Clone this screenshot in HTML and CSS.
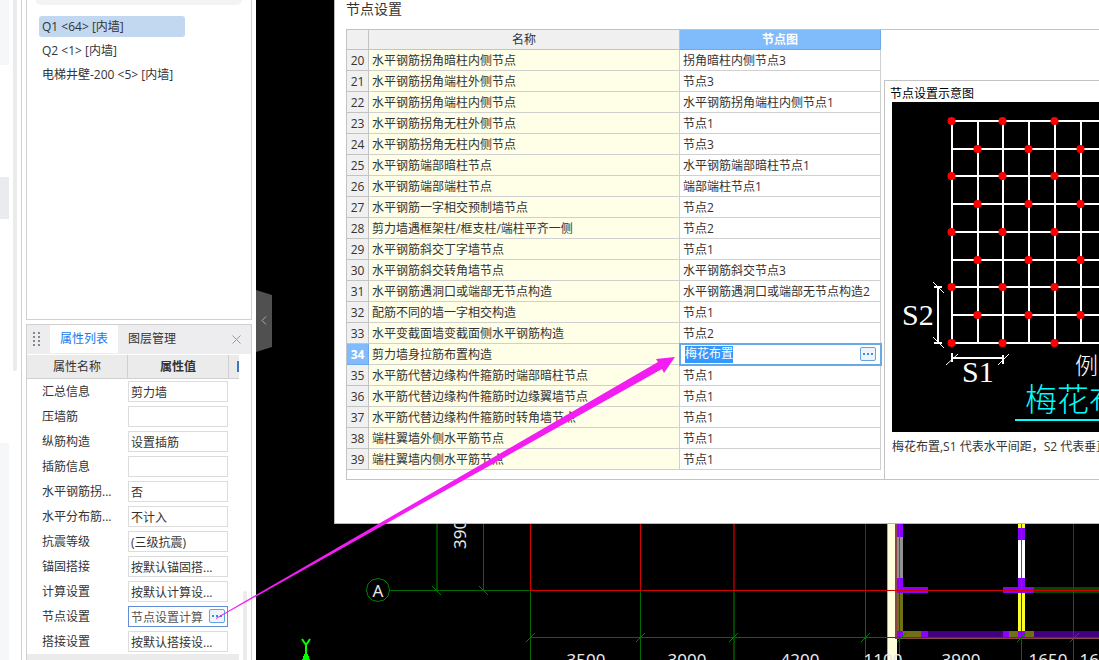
FILE: index.html
```html
<!DOCTYPE html>
<html lang="zh-CN">
<head>
<meta charset="utf-8">
<title>节点设置</title>
<link rel="stylesheet" href="styles.css">
</head>
<body>
<div class="app">
  <div class="rail">
    <div class="rail-blocks"><i class="block block-a"></i><i class="block block-b"></i><i class="block block-c"></i></div>
    <div class="rail-scroll"></div>
  </div>

  <aside class="side">
    <section class="panel components">
      <div class="search"></div>
      <ul class="component-list">
        <li><button class="component selected">Q1 &lt;64&gt; [内墙]</button></li>
        <li><button class="component">Q2 &lt;1&gt; [内墙]</button></li>
        <li><button class="component">电梯井壁-200 &lt;5&gt; [内墙]</button></li>
      </ul>
    </section>

    <section class="panel props">
      <div class="tabs">
        <svg class="grip" width="8" height="16" viewBox="0 0 8 16"><path d="M0 0h2v2H0zM5 0h2v2H5zM0 4h2v2H0zM5 4h2v2H5zM0 8h2v2H0zM5 8h2v2H5zM0 12h2v2H0zM5 12h2v2H5z" fill="#888"/></svg>
        <button class="tab active">属性列表</button>
        <button class="tab">图层管理</button>
        <button class="close" aria-label="关闭"><svg width="9" height="9" viewBox="0 0 9 9"><path d="M.5.5l8 8M8.5.5l-8 8" stroke="#999" fill="none"/></svg></button>
      </div>
      <div class="props-body">
        <table class="prop-table">
          <colgroup><col class="c-name"><col class="c-value"><col class="c-extra"></colgroup>
          <thead><tr><th>属性名称</th><th class="strong">属性值</th><th class="extra"><i class="extra-mark"></i></th></tr></thead>
          <tbody>
            <tr><td><label for="p1">汇总信息</label></td><td><input id="p1" value="剪力墙"></td><td></td></tr>
            <tr><td><label for="p2">压墙筋</label></td><td><input id="p2"></td><td></td></tr>
            <tr><td><label for="p3">纵筋构造</label></td><td><input id="p3" value="设置插筋"></td><td></td></tr>
            <tr><td><label for="p4">插筋信息</label></td><td><input id="p4"></td><td></td></tr>
            <tr><td><label for="p5">水平钢筋拐...</label></td><td><input id="p5" value="否"></td><td></td></tr>
            <tr><td><label for="p6">水平分布筋...</label></td><td><input id="p6" value="不计入"></td><td></td></tr>
            <tr><td><label for="p7">抗震等级</label></td><td><input id="p7" value="(三级抗震)"></td><td></td></tr>
            <tr><td><label for="p8">锚固搭接</label></td><td><input id="p8" value="按默认锚固搭..."></td><td></td></tr>
            <tr><td><label for="p9">计算设置</label></td><td><input id="p9" value="按默认计算设..."></td><td></td></tr>
            <tr><td><label for="p10">节点设置</label></td><td><div class="field editing"><input id="p10" value="节点设置计算"><button class="more" aria-label="更多"><i></i><i></i><i></i></button></div></td><td></td></tr>
            <tr><td><label for="p11">搭接设置</label></td><td><input id="p11" value="按默认搭接设..."></td><td></td></tr>
            <tr class="group"><td colspan="3"></td></tr>
          </tbody>
        </table>
        <div class="props-scroll"></div>
      </div>
    </section>
  </aside>

  <main class="canvas">
    <svg class="drawing" width="100%" height="100%">
      <g transform="translate(-256 0)" fill="none" shape-rendering="crispEdges">
        <path d="M888 523h9v137h-9z" fill="#ffffdc"/>
        <path d="M887 523h1v137h-1z" fill="#aaaa99"/>
        <path d="M895 523h2v116h-2zM895 637h204v2H895z" fill="#894646"/>
        <path d="M897 537h6v41h-6z" fill="#929292"/>
        <path d="M897 593h6v44h-6zM903 631h18v6h-18zM1009 631h25v6h-25z" fill="#707014"/>
        <path d="M928 631h75v6h-75zM1034 631h400v6h-400z" fill="#400080"/>
        <path d="M1018 540h7v38h-7z" fill="#fff"/>
        <path d="M1018 523h7v5h-7zM1018 593h7v38h-7z" fill="#ffff28"/>
        <path d="M1034 587h400v6h-400z" fill="#004d00"/>
        <path d="M897 524h6v13h-6zM897 578h6v15h-6zM897 587h31v6h-31zM897 631h6v6h-6zM921 631h7v6h-7zM1003 631h6v6h-6zM1018 528h7v12h-7zM1018 578h7v15h-7zM1003 587h31v6h-31zM1018 631h7v6h-7z" fill="#8b00ff"/>
        <path d="M437 523v67" stroke="#004600" stroke-width="2"/>
        <path d="M483.500 523v67M389 590.500h141M530.500 591v69M640.500 591v69M865.500 591v69M899.500 591v69M1021.500 591v69M1073.500 591v69M530 637.500h900" stroke="#006a00"/>
        <path d="M734 591v69" stroke="#004600" stroke-width="2"/>
        <path d="M530.500 523v68M640.500 523v68M530 590.500h900" stroke="#d40000"/>
        <path d="M734 523v67" stroke="#850000" stroke-width="2"/>
        <path d="M865.500 523v67M1073.500 523v67" stroke="#b40000"/>
        <path d="M899.500 523v67M1021.500 523v67" stroke="#ed1020"/>
        <g stroke="#008000" shape-rendering="auto">
          <path d="M432 586l9 9M479 586l9 9M526 642l9-9M636 642l9-9M729 642l9-9M861 642l9-9M897 642l9-9M1017 642l9-9M1070 642l9-9"/>
          <path d="M378 578.500l6 1.500 4 4 1.500 6-1.500 6-4 4-6 1.500-6-1.500-4-4-1.500-6 1.500-6 4-4z"/>
        </g>
        <path d="M302 639l4 6 4-6M306 645v7" stroke="#00ff00" stroke-width="2" shape-rendering="auto"/>
        <path d="M306 650l4 10h-8z" fill="#00ff00"/>
        <g class="dims">
          <text x="378" y="597">A</text>
          <text transform="translate(466 549) rotate(-90)" class="start">3900</text>
          <text x="586" y="666">3500</text><text x="687" y="666">3000</text><text x="800" y="666">4200</text>
          <text x="883" y="666">1100</text><text x="961" y="666">3900</text><text x="1048" y="666">1650</text><text x="1099" y="666">1650</text>
        </g>
      </g>
    </svg>
    <button class="collapse" aria-label="收起"><svg width="6" height="9" viewBox="0 0 6 9"><path d="M5 .5l-4 4 4 4" stroke="#aaa" fill="none"/></svg></button>

    <section class="dialog">
      <h1 class="dialog-title">节点设置</h1>
      <div class="frame">
        <table class="nodes">
          <colgroup><col class="n-index"><col class="n-name"><col class="n-value"></colgroup>
          <thead><tr><th></th><th>名称</th><th class="current">节点图</th></tr></thead>
          <tbody>
            <tr><th>20</th><td>水平钢筋拐角暗柱内侧节点</td><td>拐角暗柱内侧节点3</td></tr>
            <tr><th>21</th><td>水平钢筋拐角端柱外侧节点</td><td>节点3</td></tr>
            <tr><th>22</th><td>水平钢筋拐角端柱内侧节点</td><td>水平钢筋拐角端柱内侧节点1</td></tr>
            <tr><th>23</th><td>水平钢筋拐角无柱外侧节点</td><td>节点1</td></tr>
            <tr><th>24</th><td>水平钢筋拐角无柱内侧节点</td><td>节点3</td></tr>
            <tr><th>25</th><td>水平钢筋端部暗柱节点</td><td>水平钢筋端部暗柱节点1</td></tr>
            <tr><th>26</th><td>水平钢筋端部端柱节点</td><td>端部端柱节点1</td></tr>
            <tr><th>27</th><td>水平钢筋一字相交预制墙节点</td><td>节点2</td></tr>
            <tr><th>28</th><td>剪力墙遇框架柱/框支柱/端柱平齐一侧</td><td>节点2</td></tr>
            <tr><th>29</th><td>水平钢筋斜交丁字墙节点</td><td>节点1</td></tr>
            <tr><th>30</th><td>水平钢筋斜交转角墙节点</td><td>水平钢筋斜交节点3</td></tr>
            <tr><th>31</th><td>水平钢筋遇洞口或端部无节点构造</td><td>水平钢筋遇洞口或端部无节点构造2</td></tr>
            <tr><th>32</th><td>配筋不同的墙一字相交构造</td><td>节点1</td></tr>
            <tr><th>33</th><td>水平变截面墙变截面侧水平钢筋构造</td><td>节点2</td></tr>
            <tr><th class="current">34</th><td id="n34">剪力墙身拉筋布置构造</td><td class="edit-cell"><div class="edit"><input aria-labelledby="n34" value="梅花布置"><button class="more" aria-label="更多"><i></i><i></i><i></i></button></div></td></tr>
            <tr><th>35</th><td>水平筋代替边缘构件箍筋时端部暗柱节点</td><td>节点1</td></tr>
            <tr><th>36</th><td>水平筋代替边缘构件箍筋时边缘翼墙节点</td><td>节点1</td></tr>
            <tr><th>37</th><td>水平筋代替边缘构件箍筋时转角墙节点</td><td>节点1</td></tr>
            <tr><th>38</th><td>端柱翼墙外侧水平筋节点</td><td>节点1</td></tr>
            <tr><th>39</th><td>端柱翼墙内侧水平筋节点</td><td>节点1</td></tr>
          </tbody>
        </table>
        <div class="preview">
          <h2 class="preview-title">节点设置示意图</h2>
          <svg class="diagram" width="420" height="330" viewBox="892 102 420 330">
            <g stroke="#fff" stroke-width="2" fill="none">
              <path d="M952 121v222M978 121v222M1003 121v222M1029 121v222M1055 121v222M1081 121v222M1107 121v222"/>
              <path d="M952 121h155M952 149h155M952 176h155M952 204h155M952 232h155M952 260h155M952 287h155M952 315h155M952 343h155"/>
              <path d="M938 287v56M934 287h8M934 343h8M952 358h51M952 353v9M1003 355v9"/>
              <path stroke-width="1" d="M933 282l11 11M933 337l11 11M946 365l12-11M998 365l11-11"/>
            </g>
            <path d="M951.500 121h0M1002.500 121h0M1054.500 121h0M977.500 149h0M1028.500 149h0M1080.500 149h0M951.500 176h0M1002.500 176h0M1054.500 176h0M977.500 204h0M1028.500 204h0M1080.500 204h0M951.500 232h0M1002.500 232h0M1054.500 232h0M977.500 260h0M1028.500 260h0M1080.500 260h0M951.500 287h0M1002.500 287h0M1054.500 287h0M977.500 315h0M1028.500 315h0M1080.500 315h0M951.500 343h0M1002.500 343h0M1054.500 343h0" stroke="#f00" stroke-width="8" stroke-linecap="round"/>
            <text class="dim-text" x="902" y="325">S2</text>
            <text class="dim-text" x="962" y="382">S1</text>
            <text class="example" x="1075" y="374">例</text>
            <text class="pattern" x="1025" y="411">梅花布置</text>
            <path d="M1015 420h200" stroke="#0ff" stroke-width="2"/>
          </svg>
          <p class="caption">梅花布置,S1 代表水平间距，S2 代表垂直间距</p>
        </div>
      </div>
    </section>
  </main>
  <svg class="pointer" width="100%" height="100%"><path d="M216 618L658 362l-2-3 19-2-11 16-2-4L216 619z" fill="#f31df3"/></svg>
</div>
</body>
</html>
```
FILE: styles.css
```css
* { box-sizing: border-box; }
body {
  margin: 0;
  background: #fff;
  color: #333;
  font: 12px/18px "Open Sans", "Noto Sans CJK SC", sans-serif;
}
button, input { font: inherit; color: inherit; margin: 0; padding: 0; border: 0; background: none; }
button { cursor: pointer; }
table { border-collapse: separate; border-spacing: 0; table-layout: fixed; }
td, th { padding: 0; }

.app { position: relative; display: flex; height: 100vh; overflow: hidden; }

/* left rail */
.rail { flex: none; width: 22px; display: flex; gap: 4px; border-right: 1px solid #d0d0d0; }
.rail-blocks { width: 9px; display: flex; flex-direction: column; }
.block { background: #f5f7f9; }
.block-a { height: 65px; }
.block-b { height: 42px; margin-top: 112px; background: #eaebef; }
.block-c { flex: 1; margin-top: 224px; }
.rail-scroll { width: 4px; height: 371px; background: #ebebeb; border-radius: 0 0 2px 2px; }

/* side panels */
.side { flex: none; width: 234px; padding: 0 4px; display: flex; flex-direction: column; gap: 4px; }
.panel { border: 1px solid #d0d0d0; }
.components { height: 320px; border-top: 0; padding: 0 9px; }
.search { height: 5px; margin-bottom: 11px; background: #f3f3f3; border-radius: 0 0 12px 12px; }
.component-list { list-style: none; margin: 0; padding: 0 0 0 3px; }
.component-list li { height: 24px; }
.component { width: 146px; height: 21px; padding-left: 3px; text-align: left; white-space: nowrap; border-radius: 3px; }
.component.selected { background: #c1d8f0; }
.props { flex: 1; min-height: 0; border-bottom: 0; overflow: hidden; }

.tabs { display: flex; align-items: center; height: 29px; background: #ededf0; }
.grip { margin: 0 9px 0 6px; }
.tab { height: 28px; width: 68px; align-self: flex-start; }
.tab.active { background: #fff; color: #1677f0; }
.close { margin-left: auto; margin-right: 10px; line-height: 0; }

.props-body { display: flex; align-items: flex-start; gap: 4px; margin-top: 1px; }
.prop-table { width: 212px; }
.c-name { width: 101px; }
.c-value { width: 101px; }
.prop-table th { height: 24px; background: #ebebeb; border-bottom: 1px solid #d0d0d0; border-right: 1px solid #d0d0d0; font-weight: 400; }
.prop-table th.strong { font-weight: 700; }
.prop-table th.extra { border-right: 0; }
.extra-mark { display: block; width: 2px; height: 11px; margin-left: auto; background: #3d78b8; }
.prop-table td { height: 25px; white-space: nowrap; }
.prop-table td:first-child { padding-left: 15px; }
.prop-table td:nth-child(2) { padding-right: 1px; }
.prop-table input { display: block; width: 100%; height: 21px; padding: 0 2px; border: 1px solid #dcdcdc; }
.field { position: relative; }
.prop-table .editing input { border-color: #648bd5; color: #555; }
.field .more { position: absolute; right: 3px; top: 3px; }
.prop-table .group td { height: 20px; background: #ebebeb; }
.props-scroll { width: 4px; height: 200px; margin-top: 236px; background: #ebebeb; border-radius: 2px 2px 0 0; }

.more {
  display: flex; align-items: center; justify-content: center; gap: 2px; flex: none;
  width: 16px; height: 14px; border: 1px solid #62a4e4; border-radius: 2px; background: #eef4fc;
}
.more i { width: 2px; height: 2px; background: #3f8be0; }

/* drawing area */
.canvas { position: relative; flex: 1; min-width: 0; background: #000; overflow: hidden; }
.drawing { position: absolute; left: 0; top: 0; }
.dims text { fill: #e8e8e8; font: 17px "Noto Sans", sans-serif; text-anchor: middle; }
.dims .start { text-anchor: start; }
.collapse {
  position: absolute; left: 0; top: 290px; width: 16px; height: 62px; background: #505050;
  clip-path: polygon(0 0, 100% 5px, 100% 57px, 0 100%);
}

/* dialog */
.dialog {
  position: absolute; left: 78px; right: 0; top: 0; overflow: hidden;
  padding: 0 0 43px 11px; background: #fff; border: 1px solid #b8b8b8; border-width: 0 0 1px 1px;
}
.dialog-title { margin: 0; height: 29px; font-size: 14px; line-height: 18px; font-weight: 400; }
.frame { display: flex; gap: 3px; border: 1px solid #c3c3c3; border-right: 0; height: 451px; }
.nodes { flex: none; align-self: flex-start; width: 534px; }
.n-index { width: 22px; }
.n-name { width: 311px; }
.nodes th, .nodes td { height: 21px; padding-top: 2px; line-height: 18px; border: solid #d0d0d0; border-width: 0 1px 1px 0; white-space: nowrap; }
.nodes th { background: #f0f0f0; border-color: #c3c3c3; font-weight: 400; }
.nodes thead th { height: 20px; padding-top: 1px; }
.nodes .current { background: #80bbfb; border-color: #6aa9ea; color: #fff; font-weight: 700; }
.nodes td { padding-left: 3px; }
.nodes td:nth-child(2) { background: #fffee6; }
.nodes .edit-cell { outline: 2px solid #67a8e8; outline-offset: -1px; padding: 0 4px 0 5px; }
.edit { display: flex; align-items: center; justify-content: space-between; height: 18px; }
.edit input { width: 48px; height: 17px; background: #3399ff; color: #fff; }

.preview { flex: 1; min-width: 0; margin-top: 50px; padding-left: 7px; border: 1px solid #c3c3c3; border-width: 1px 0 0 1px; overflow: hidden; }
.preview-title { margin: 0 0 0 -2px; height: 21px; padding-top: 4px; font-size: 12px; line-height: 17px; font-weight: 400; color: #000; }
.diagram { display: block; background: #000; }
.dim-text { fill: #fff; font: 30px "Liberation Serif", serif; }
.example { fill: #fff; font: 300 23px "Noto Sans CJK SC", sans-serif; }
.pattern { fill: #0ff; font: 300 32px "Noto Sans CJK SC", sans-serif; }
.caption { margin: 6px 0 0; white-space: nowrap; }

.pointer { position: absolute; left: 0; top: 0; pointer-events: none; }
```
